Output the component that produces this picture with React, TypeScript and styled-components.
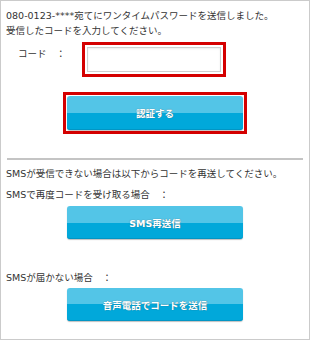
import React from "react";
import styled, { createGlobalStyle } from "styled-components";

const GlobalStyle = createGlobalStyle`
  html, body { margin: 0; padding: 0; background: #fff; }
  * { box-sizing: border-box; }
`;

const Frame = styled.div`
  width: 310px;
  height: 340px;
  border: 1px solid #cbcbcb;
  padding: 7px 5px 0 5px;
  font-family: "DejaVu Sans", "Noto Sans CJK JP", sans-serif;
  font-size: 9.5px;
  line-height: 15px;
  color: #333;
  display: flex;
  flex-direction: column;
`;

const Text = styled.p<{ $mt?: number; $indent?: number }>`
  margin: ${(p) => p.$mt ?? 0}px 0 0 ${(p) => p.$indent ?? 0}px;
  white-space: nowrap;
`;

const CodeRow = styled.div`
  display: flex;
  align-items: flex-start;
  gap: 16px;
  margin-top: 4px;
`;

const Label = styled.span`
  margin-top: 4px;
  padding-left: 12px;
  width: 60px;
  white-space: nowrap;
`;

const Highlight = styled.div<{ $pad: number }>`
  border: 3px solid #d40000;
  padding: ${(p) => p.$pad}px;
  display: flex;
`;

const Input = styled.input`
  width: 134px;
  height: 25px;
  border: 1px solid #cfcfcf;
  box-shadow: inset 0 1px 2px rgba(0, 0, 0, 0.08);
  padding: 0 4px;
  font: inherit;
  outline: none;
`;

const Centered = styled.div<{ $mt: number }>`
  display: flex;
  justify-content: center;
  margin-top: ${(p) => p.$mt}px;
`;

const Button = styled.button<{ $h?: number }>`
  width: 176px;
  height: ${(p) => p.$h ?? 33}px;
  border: none;
  border-radius: 3px;
  background: linear-gradient(to bottom, #53c5e7 0%, #53c5e7 50%, #01a8da 50%, #01a8da 100%);
  box-shadow: 0 1px 1px rgba(0, 0, 0, 0.25), inset 0 -1px 0 #0295c4;
  color: #fff;
  font-family: "DejaVu Sans", "Noto Sans CJK JP", sans-serif;
  font-size: 9.5px;
  font-weight: bold;
  text-shadow: 0 0 1px rgba(60, 80, 90, 0.8);
  padding: 0;
  cursor: pointer;
`;

const Divider = styled.hr`
  border: none;
  height: 2px;
  background: #c4c4c4;
  margin: 24px 1px 0 1px;
  width: auto;
`;

export default function App() {
  return (
    <>
      <GlobalStyle />
      <Frame>
        <Text>080-0123-****宛てにワンタイムパスワードを送信しました。</Text>
        <Text>受信したコードを入力してください。</Text>
        <CodeRow>
          <Label>コード　：</Label>
          <Highlight $pad={2}>
            <Input type="text" />
          </Highlight>
        </CodeRow>
        <Centered $mt={15}>
          <Highlight $pad={1}>
            <Button $h={34}>認証する</Button>
          </Highlight>
        </Centered>
        <Divider />
        <Text $mt={6}>SMSが受信できない場合は以下からコードを再送してください。</Text>
        <Text $mt={6}>SMSで再度コードを受け取る場合　：</Text>
        <Centered $mt={4}>
          <Button>SMS再送信</Button>
        </Centered>
        <Text $mt={31}>SMSが届かない場合　：</Text>
        <Centered $mt={3}>
          <Button>音声電話でコードを送信</Button>
        </Centered>
      </Frame>
    </>
  );
}
